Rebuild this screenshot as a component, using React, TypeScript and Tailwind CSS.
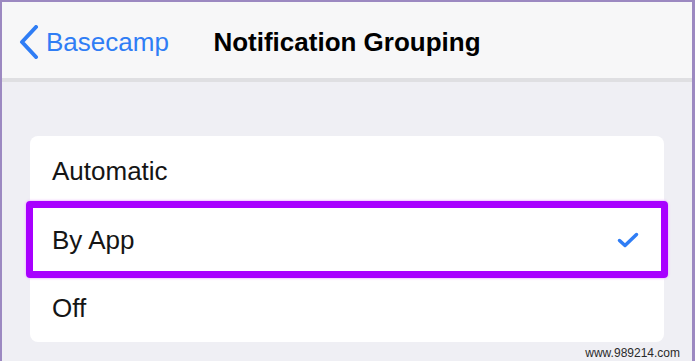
const FONT = "font-['Liberation_Sans',Arial,sans-serif]";

const OPTIONS = [
  { label: "Automatic", h: "h-[69px]" },
  { label: "By App", h: "h-[69px]", selected: true },
  { label: "Off", h: "h-[68px]" },
];

export default function App() {
  return (
    <div className={`w-[695px] h-[364px] bg-white ${FONT}`}>
      <div className="h-[361px] flex flex-col border-l-2 border-t-2 border-r-[3px] border-[#9c89c1] bg-[#efeff4]">
        {/* nav bar */}
        <header className="h-[76px] shrink-0 grid grid-cols-[1fr_auto_1fr] items-center pt-[3px] bg-[#f7f7f8]">
          <div className="flex items-center pl-[16px] text-[#2f7df5]">
            <svg width="22" height="34" viewBox="0 0 22 34" fill="none" className="mr-[6px]">
              <path
                d="M18 2 L4 17 L18 32"
                stroke="currentColor"
                strokeWidth="4"
                strokeLinecap="round"
                strokeLinejoin="round"
              />
            </svg>
            <span className="text-[26px] leading-none">Basecamp</span>
          </div>
          <h1 className="text-[26px] leading-none font-bold text-black">Notification Grouping</h1>
          <div />
        </header>
        <div className="h-[4px] shrink-0 bg-[#dfdfe2]" />

        {/* options card */}
        <div className="flex-1 flex flex-col">
          <div className="mt-[54px] mx-[28px] bg-white rounded-[8px]">
            {OPTIONS.map((o) => (
              <div key={o.label} className={`relative ${o.h} flex items-center justify-between pl-[22px] pr-[25px]`}>
                <span className="text-[26px] leading-none text-[#151515]">{o.label}</span>
                {o.selected ? (
                  <>
                    <svg width="22" height="16" viewBox="0 0 22 16" fill="none">
                      <path
                        d="M2.5 8.5 L8 13.5 L19.5 2.5"
                        stroke="#2f7df5"
                        strokeWidth="3.5"
                        strokeLinecap="round"
                        strokeLinejoin="round"
                      />
                    </svg>
                    <div className="absolute -inset-x-[4px] -inset-y-[4px] border-[7px] border-[#a800ff] rounded-[4px] shadow-[0_0_2px_1px_#f0c8ff]" />
                  </>
                ) : null}
              </div>
            ))}
          </div>
          <div className="mt-auto pr-[12px] pb-[2px] text-right text-[12px] leading-none text-[#2a2a2a]">
            www.989214.com
          </div>
        </div>
      </div>
    </div>
  );
}
